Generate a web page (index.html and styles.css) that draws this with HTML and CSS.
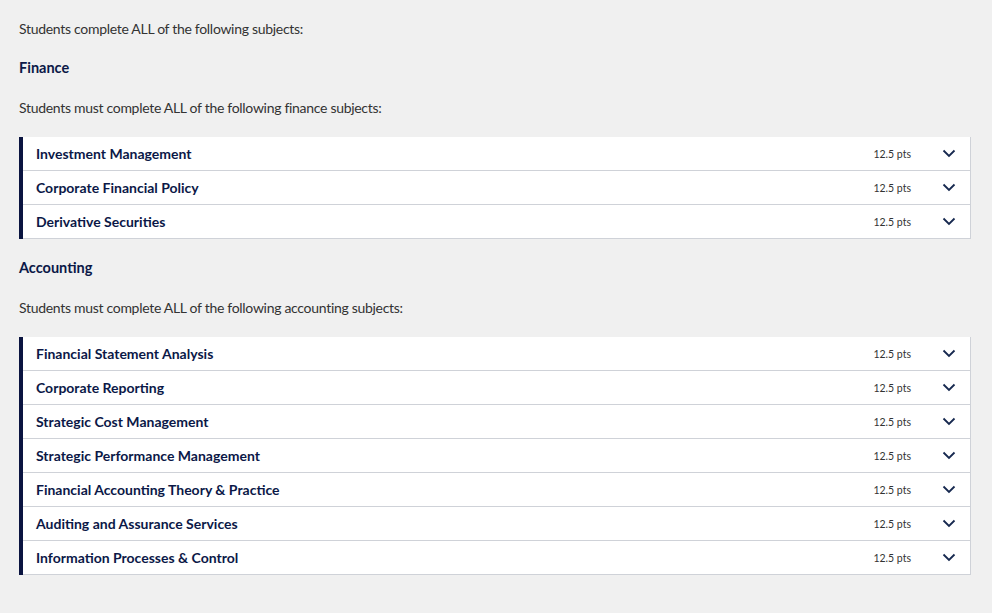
FILE: index.html
```html
<!DOCTYPE html>
<html lang="en">
<head>
<meta charset="utf-8">
<link rel="stylesheet" href="styles.css">
</head>
<body>
<main class="content">
  <p class="intro">Students complete ALL of the following subjects:</p>

  <h3 class="group-title">Finance</h3>
  <p class="intro">Students must complete ALL of the following finance subjects:</p>
  <ul class="subjects">
    <li class="subject"><span class="name">Investment Management</span><span class="pts">12.5 pts</span><svg class="chev" viewBox="0 0 14 9"><path d="M1.5 1.5 L7 7 L12.5 1.5"/></svg></li>
    <li class="subject"><span class="name">Corporate Financial Policy</span><span class="pts">12.5 pts</span><svg class="chev" viewBox="0 0 14 9"><path d="M1.5 1.5 L7 7 L12.5 1.5"/></svg></li>
    <li class="subject"><span class="name">Derivative Securities</span><span class="pts">12.5 pts</span><svg class="chev" viewBox="0 0 14 9"><path d="M1.5 1.5 L7 7 L12.5 1.5"/></svg></li>
  </ul>

  <h3 class="group-title">Accounting</h3>
  <p class="intro">Students must complete ALL of the following accounting subjects:</p>
  <ul class="subjects">
    <li class="subject"><span class="name">Financial Statement Analysis</span><span class="pts">12.5 pts</span><svg class="chev" viewBox="0 0 14 9"><path d="M1.5 1.5 L7 7 L12.5 1.5"/></svg></li>
    <li class="subject"><span class="name">Corporate Reporting</span><span class="pts">12.5 pts</span><svg class="chev" viewBox="0 0 14 9"><path d="M1.5 1.5 L7 7 L12.5 1.5"/></svg></li>
    <li class="subject"><span class="name">Strategic Cost Management</span><span class="pts">12.5 pts</span><svg class="chev" viewBox="0 0 14 9"><path d="M1.5 1.5 L7 7 L12.5 1.5"/></svg></li>
    <li class="subject"><span class="name">Strategic Performance Management</span><span class="pts">12.5 pts</span><svg class="chev" viewBox="0 0 14 9"><path d="M1.5 1.5 L7 7 L12.5 1.5"/></svg></li>
    <li class="subject"><span class="name">Financial Accounting Theory &amp; Practice</span><span class="pts">12.5 pts</span><svg class="chev" viewBox="0 0 14 9"><path d="M1.5 1.5 L7 7 L12.5 1.5"/></svg></li>
    <li class="subject"><span class="name">Auditing and Assurance Services</span><span class="pts">12.5 pts</span><svg class="chev" viewBox="0 0 14 9"><path d="M1.5 1.5 L7 7 L12.5 1.5"/></svg></li>
    <li class="subject"><span class="name">Information Processes &amp; Control</span><span class="pts">12.5 pts</span><svg class="chev" viewBox="0 0 14 9"><path d="M1.5 1.5 L7 7 L12.5 1.5"/></svg></li>
  </ul>
</main>
</body>
</html>
```

FILE: styles.css
```css
html, body {
  margin: 0;
  padding: 0;
  background: #f0f0f0;
}

body {
  font-family: Lato, "Noto Sans", "Liberation Sans", sans-serif;
  color: #333;
}

.content {
  padding: 19px 21px 0 19px;
  display: flex;
  flex-direction: column;
}

.intro {
  margin: 0 0 19px;
  font-size: 14px;
  letter-spacing: -0.3px;
  line-height: 20px;
  color: #333;
}

.group-title {
  margin: 0 0 20px;
  font-size: 14.5px;
  line-height: 20px;
  font-weight: 700;
  color: #0b1847;
}

.subjects {
  list-style: none;
  margin: 0 0 19px;
  padding: 0;
  border-left: 4px solid #0a1440;
  border-right: 1px solid #cfd2d8;
  background: #fff;
}

.subject {
  display: flex;
  align-items: center;
  height: 33px;
  border-bottom: 1px solid #cfd2d8;
  padding: 0 14px 0 13px;
}

.name {
  flex: 1;
  font-size: 14px;
  font-weight: 700;
  color: #0b1847;
}

.pts {
  font-size: 10.5px;
  color: #333;
  margin-right: 31px;
}

.chev {
  width: 14px;
  height: 9px;
  fill: none;
  stroke: #16284f;
  stroke-width: 1.8;
}
```
